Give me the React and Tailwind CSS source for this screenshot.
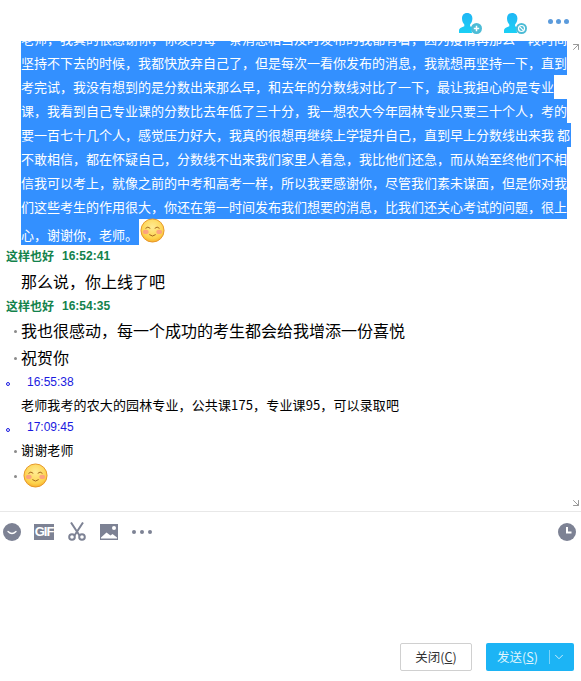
import { ArrowUpRight, ArrowDownRight, ChevronDown } from 'lucide-react';

const selectedLines = [
  { text: '老师，我真的很感谢你，你发的每一条消息相当及时发布的我都有看，因为疫情再那么一段时间', w: 'w-[546px]' },
  { text: '坚持不下去的时候，我都快放弃自己了，但是每次一看你发布的消息，我就想再坚持一下，直到', w: 'w-[546px]' },
  { text: '考完试，我没有想到的是分数出来那么早，和去年的分数线对比了一下，最让我担心的是专业', w: 'w-[533px]' },
  { text: '课，我看到自己专业课的分数比去年低了三十分，我一想农大今年园林专业只要三十个人，考的', w: 'w-[546px]' },
  { text: '要一百七十几个人，感觉压力好大，我真的很想再继续上学提升自己，直到早上分数线出来我 都', w: 'w-[550px]' },
  { text: '不敢相信，都在怀疑自己，分数线不出来我们家里人着急，我比他们还急，而从始至终他们不相', w: 'w-[546px]' },
  { text: '信我可以考上，就像之前的中考和高考一样，所以我要感谢你，尽管我们素未谋面，但是你对我', w: 'w-[546px]' },
  { text: '们这些考生的作用很大，你还在第一时间发布我们想要的消息，比我们还关心考试的问题，很上', w: 'w-[546px]' },
];

function Smiley({ className }) {
  return (
    <svg viewBox="0 0 26 26" className={className}>
      <defs>
        <radialGradient id="face" cx="50%" cy="35%" r="70%">
          <stop offset="0%" stopColor="#ffeb94" />
          <stop offset="70%" stopColor="#fdd34d" />
          <stop offset="100%" stopColor="#f6a623" />
        </radialGradient>
      </defs>
      <circle cx="13" cy="13" r="12" fill="url(#face)" stroke="#e6962a" strokeWidth="1" />
      <ellipse cx="6" cy="14.5" rx="3" ry="2.2" fill="#fb9a84" opacity="0.85" />
      <ellipse cx="20" cy="14.5" rx="3" ry="2.2" fill="#fb9a84" opacity="0.85" />
      <path d="M6 10.5q2.2-2.4 4.4 0M15.6 10.5q2.2-2.4 4.4 0" fill="none" stroke="#a0621c" strokeWidth="1" strokeLinecap="round" />
      <path d="M10 17.5q3 2.8 6 0" fill="none" stroke="#a0621c" strokeWidth="1" strokeLinecap="round" />
    </svg>
  );
}

function Person({ badge }) {
  return (
    <svg viewBox="0 0 23 21" className="w-[23px] h-[21px]">
      <defs>
        <linearGradient id={`person-${badge}`} x1="0" y1="0" x2="0" y2="1">
          <stop offset="0%" stopColor="#1fb6f5" />
          <stop offset="100%" stopColor="#1bd0f5" />
        </linearGradient>
      </defs>
      <path
        d="M8 0c3.600 0 5.400 2.400 5.400 5.600 0 2.600-1 4.600-2.300 6v1.600c1 .5 2 .9 3 1.300-1.200 1.200-1.700 3.500-1 5.500H0v-2.200c0-1.600 1-2.600 2.400-3.200l2.900-1.400v-1.600C4 10.200 3 8.200 3 5.600 3 2.400 4.600 0 8 0z"
        fill={`url(#person-${badge})`}
      />
      <circle cx="17.500" cy="15.500" r="5.500" fill="#4dbcd6" />
      {badge === 'add' ? (
        <path d="M17.500 12.800v5.400M14.800 15.500h5.400" stroke="#fff" strokeWidth="1.500" />
      ) : (
        <g fill="none" stroke="#fff" strokeWidth="1.200">
          <circle cx="17.500" cy="15.500" r="3" />
          <path d="M15.400 13.400l4.200 4.200" />
        </g>
      )}
    </svg>
  );
}

function Dots({ className, dot }) {
  return (
    <div className={`flex items-center justify-between ${className}`}>
      <span className={`rounded-full ${dot}`} />
      <span className={`rounded-full ${dot}`} />
      <span className={`rounded-full ${dot}`} />
    </div>
  );
}

function NameRow({ time, h }) {
  return (
    <div className={`flex items-center pl-[6px] text-[12px] font-bold text-[#13824c] gap-[8px] ${h}`}>
      <span>这样也好</span>
      <span className="font-['Liberation_Sans',sans-serif]">{time}</span>
    </div>
  );
}

function TimeRow({ time, h }) {
  return (
    <div className={`flex items-center pl-[6px] text-[12px] text-[#1a1ae0] ${h}`}>
      <span className="w-[4px] h-[4px] mt-[5px] rounded-full border border-[#1a1ae0]" />
      <span className="ml-[17px] font-['Liberation_Sans',sans-serif]">{time}</span>
    </div>
  );
}

function Message({ children, h, small, bullet }) {
  return (
    <div className={`flex items-center relative pl-[21px] text-black ${h} ${small ? 'text-[13px] tracking-[0.13px]' : 'text-[16px]'}`}>
      {bullet && <span className="absolute left-[14px] top-1/2 w-[3px] h-[3px] rounded-full bg-[#8a8a8a]" />}
      {children}
    </div>
  );
}

export default function App() {
  return (
    <div className="h-[681px] w-[581px] bg-white flex flex-col overflow-hidden font-['Noto_Sans_CJK_SC','Liberation_Sans',sans-serif]">
      {/* Top icons */}
      <div className="h-[41px] shrink-0 flex justify-end items-start pt-[13px] pr-[12px]">
        <Person badge="add" />
        <div className="ml-[22px]">
          <Person badge="block" />
        </div>
        <Dots className="w-[21px] ml-[21px] mt-[6px]" dot="w-[5px] h-[5px] bg-[#5b9bdc]" />
      </div>

      {/* Messages */}
      <div className="h-[470px] shrink-0 relative overflow-hidden">
        <div className="-mt-[14px] pl-[21px]">
          {selectedLines.map((line) => (
            <div key={line.text} className={`h-[24px] leading-[24px] bg-[#3390ff] text-white text-[13px] whitespace-nowrap overflow-hidden ${line.w}`}>
              {line.text}
            </div>
          ))}
          <div className="h-[26px] flex items-end">
            <span className="h-[26px] leading-[32px] bg-[#3390ff] text-white text-[13px] pr-[1px]">心，谢谢你，老师。</span>
            <Smiley className="w-[25px] h-[25px] ml-[1px] mb-[2px]" />
          </div>
        </div>

        <NameRow time="16:52:41" h="h-[22px]" />
        <Message h="h-[27px]">那么说，你上线了吧</Message>
        <NameRow time="16:54:35" h="h-[23px]" />
        <Message h="h-[26px]" bullet>我也很感动，每一个成功的考生都会给我增添一份喜悦</Message>
        <Message h="h-[27px]" bullet>祝贺你</Message>
        <TimeRow time="16:55:38" h="h-[23px]" />
        <Message h="h-[23px]" small>老师我考的农大的园林专业，公共课175，专业课95，可以录取吧</Message>
        <TimeRow time="17:09:45" h="h-[22px]" />
        <Message h="h-[24px]" small bullet>谢谢老师</Message>
        <Message h="h-[26px]" bullet>
          <Smiley className="w-[25px] h-[25px] ml-[2px]" />
        </Message>

        <ArrowUpRight className="absolute -right-px top-0 w-[12px] h-[12px] text-[#9a9a9a]" strokeWidth={2} />
        <ArrowDownRight className="absolute -right-px bottom-[2px] w-[12px] h-[12px] text-[#9a9a9a]" strokeWidth={2} />
      </div>

      {/* Toolbar */}
      <div className="h-[40px] shrink-0 border-t border-[#e8e8e8] flex items-center pl-[3px] pr-[5px]">
        <svg viewBox="0 0 18 18" className="w-[18px] h-[18px]">
          <circle cx="9" cy="9" r="9" fill="#7d8294" />
          <path d="M5 8.500q4 4 8 0" fill="none" stroke="#fff" strokeWidth="1.300" strokeLinecap="round" />
        </svg>
        <div className="ml-[13px] w-[20px] h-[16px] bg-[#7d8294] text-white text-[13px] font-bold leading-[16px] text-center font-['Liberation_Sans',sans-serif] tracking-[-1px]">
          GIF
        </div>
        <svg viewBox="0 0 18 19" className="ml-[14px] w-[18px] h-[19px]" fill="none" stroke="#7d8294">
          <path d="M3 0.500l8.500 13M15 0.500l-8.500 13" strokeWidth="2" />
          <circle cx="4" cy="15" r="2.800" strokeWidth="2" />
          <circle cx="14" cy="15" r="2.800" strokeWidth="2" />
        </svg>
        <svg viewBox="0 0 18 16" className="ml-[14px] w-[18px] h-[16px]">
          <rect width="18" height="16" fill="#7d8294" />
          <path d="M1 13.500l5.500-5 4 3 2-1.500 4.500 3.500v1H1z" fill="#fff" />
          <circle cx="14" cy="4" r="2" fill="#fff" />
        </svg>
        <Dots className="ml-[14px] w-[20px]" dot="w-[4px] h-[4px] bg-[#7d8294]" />
        <svg viewBox="0 0 18 18" className="ml-auto w-[18px] h-[18px]">
          <circle cx="9" cy="9" r="9" fill="#7d8294" />
          <path d="M9 4v5.500h4.500" fill="none" stroke="#fff" strokeWidth="2" />
        </svg>
      </div>

      {/* Input area */}
      <div className="flex-1" />

      {/* Buttons */}
      <div className="shrink-0 flex justify-end gap-[14px] pr-[7px] pb-[10px] text-[12.500px]">
        <button className="w-[72px] h-[28px] bg-white border border-[#d0d0d0] rounded-[2px] text-[#333]">
          关闭(<span className="underline">C</span>)
        </button>
        <button className="w-[88px] h-[28px] bg-[#1cb4f5] rounded-[2px] text-[#dff4fd] flex items-center">
          <span className="pl-[11px] w-[63px] text-left whitespace-nowrap">
            发送(<span className="underline">S</span>)
          </span>
          <span className="w-px h-[14px] bg-[#7ed3f8]" />
          <ChevronDown className="ml-[2px] w-[14px] h-[14px]" strokeWidth={1.5} />
        </button>
      </div>
    </div>
  );
}
